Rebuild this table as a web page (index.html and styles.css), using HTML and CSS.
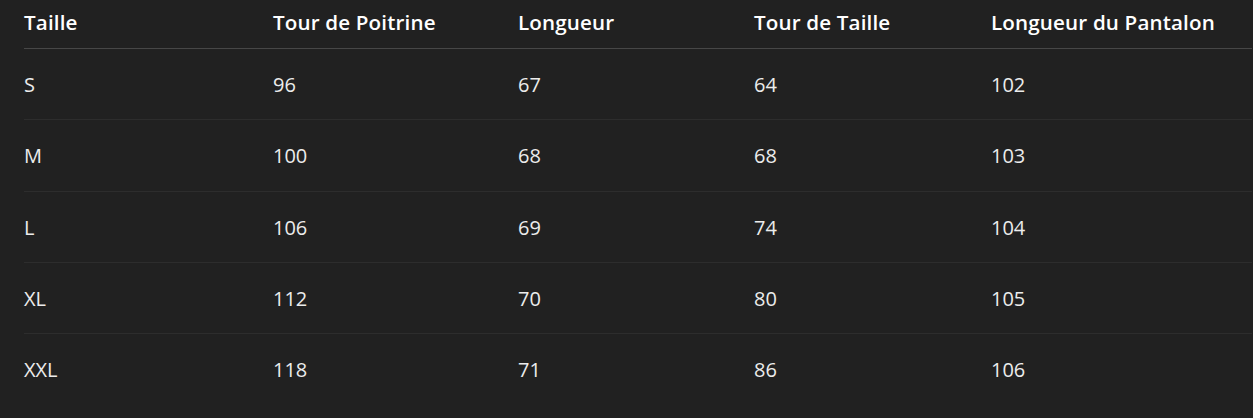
FILE: index.html
```html
<!DOCTYPE html>
<html lang="fr">
<head>
<meta charset="utf-8">
<title>Guide des tailles</title>
<link rel="stylesheet" href="styles.css">
</head>
<body>
<table class="size-table">
  <colgroup>
    <col class="c1"><col class="c2"><col class="c3"><col class="c4"><col class="c5">
  </colgroup>
  <thead>
    <tr><th>Taille</th><th>Tour de Poitrine</th><th>Longueur</th><th>Tour de Taille</th><th>Longueur du Pantalon</th></tr>
  </thead>
  <tbody>
    <tr><td>S</td><td>96</td><td>67</td><td>64</td><td>102</td></tr>
    <tr><td>M</td><td>100</td><td>68</td><td>68</td><td>103</td></tr>
    <tr><td>L</td><td>106</td><td>69</td><td>74</td><td>104</td></tr>
    <tr><td>XL</td><td>112</td><td>70</td><td>80</td><td>105</td></tr>
    <tr><td>XXL</td><td>118</td><td>71</td><td>86</td><td>106</td></tr>
  </tbody>
</table>
</body>
</html>
```

FILE: styles.css
```css
html, body {
  margin: 0;
  background: #212121;
}
body {
  padding: 0 1px 0 24px;
  font-family: "Open Sans", "Noto Sans", sans-serif;
  color: #ececec;
}
.size-table {
  width: 1228px;
  border-collapse: collapse;
  table-layout: fixed;
  font-size: 20px;
  line-height: 28px;
}
.c1 { width: 249px; }
.c2 { width: 245px; }
.c3 { width: 236px; }
.c4 { width: 237px; }
.c5 { width: 261px; }
.size-table th {
  text-align: left;
  font-weight: 600;
  font-size: 20.6px;
  letter-spacing: 0.15px;
  color: #ffffff;
  padding: 8px 0 12px 0;
  border-bottom: 1px solid #474747;
}
.size-table td {
  padding: 22px 0 21px 0;
  line-height: 27.3px;
  border-bottom: 1px solid #2d2d2d;
}
.size-table tbody tr:last-child td {
  border-bottom: none;
}
```
